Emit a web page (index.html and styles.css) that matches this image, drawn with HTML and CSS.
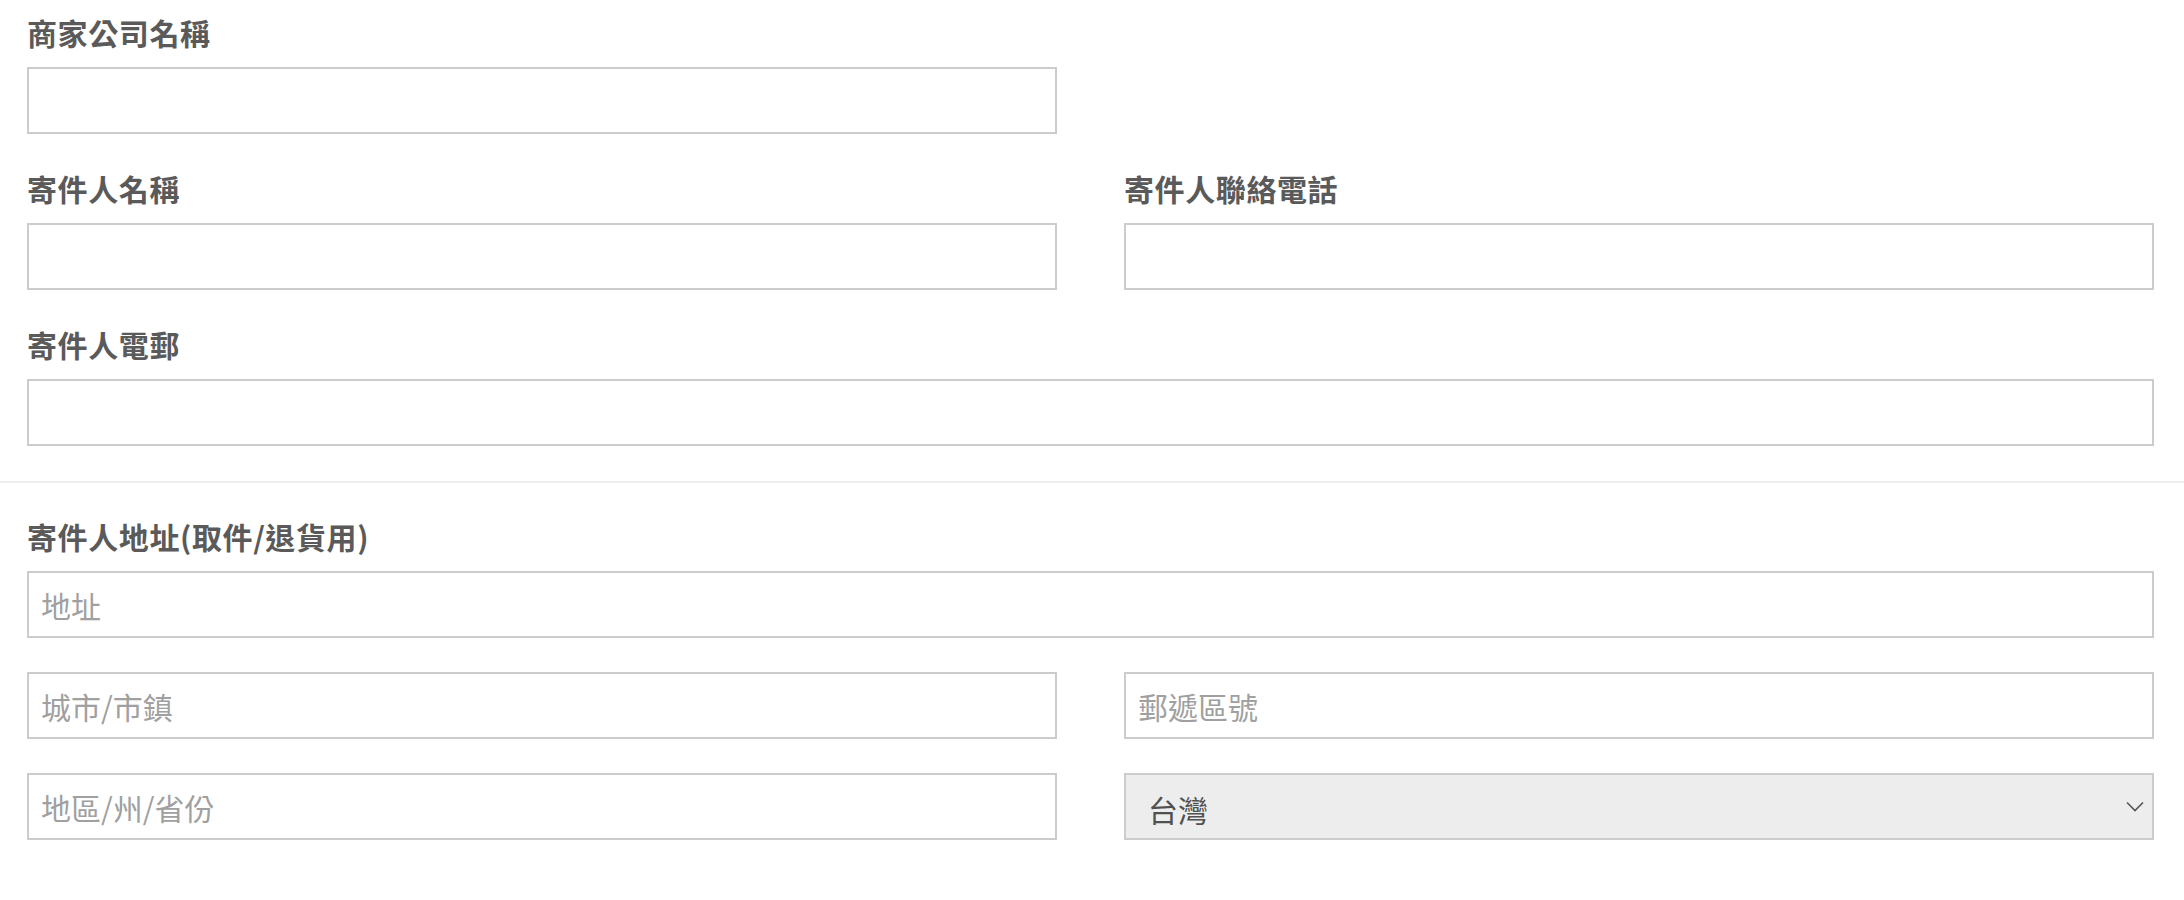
FILE: index.html
```html
<!DOCTYPE html>
<html lang="zh-Hant">
<head>
    <meta charset="UTF-8">
    <meta name="viewport" content="width=device-width, initial-scale=1.0">
    <title>寄件人資料</title>
    <link rel="stylesheet" href="styles.css">
</head>
<body>

    <!-- Merchant / sender info -->
    <div class="form-section">
        <div class="row">
            <div class="field">
                <label for="company">商家公司名稱</label>
                <input type="text" id="company">
            </div>
        </div>
        <div class="row">
            <div class="field">
                <label for="sender-name">寄件人名稱</label>
                <input type="text" id="sender-name">
            </div>
            <div class="field">
                <label for="sender-phone">寄件人聯絡電話</label>
                <input type="text" id="sender-phone">
            </div>
        </div>
        <div class="field">
            <label for="sender-email">寄件人電郵</label>
            <input type="email" id="sender-email">
        </div>
    </div>

    <!-- Sender address -->
    <div class="form-section address-section">
        <label for="address">寄件人地址(取件/退貨用)</label>
        <div class="address-fields">
            <input type="text" id="address" placeholder="地址">
            <div class="row">
                <input type="text" placeholder="城市/市鎮">
                <input type="text" placeholder="郵遞區號">
            </div>
            <div class="row">
                <input type="text" placeholder="地區/州/省份">
                <div class="select-wrap">
                    <select>
                        <option>台灣</option>
                        <option>香港</option>
                        <option>澳門</option>
                    </select>
                    <svg class="chevron" width="18" height="11" viewBox="0 0 18 11">
                        <path d="M1 1.5 L9 9.5 L17 1.5" fill="none" stroke="#555" stroke-width="1.6"/>
                    </svg>
                </div>
            </div>
        </div>
    </div>

</body>
</html>
```

FILE: styles.css
```css
/* Basic Styling */
body {
    font-family: "Noto Sans CJK TC", "Noto Sans", sans-serif;
    background-color: #fff;
    margin: 0;
    padding: 0;
}

.form-section {
    padding: 14px 30px 35px 27px;
}

.row {
    display: grid;
    grid-template-columns: 1fr 1fr;
    column-gap: 67px;
}

.field {
    margin-bottom: 36px;
}

.form-section > .field:last-child {
    margin-bottom: 0;
}

label {
    display: block;
    font-size: 30px;
    line-height: 36px;
    font-weight: bold;
    letter-spacing: 0.6px;
    color: #5a5a5a;
    margin-bottom: 17px;
}

input,
select {
    display: block;
    width: 100%;
    height: 67px;
    box-sizing: border-box;
    border: 2px solid #ccc;
    border-radius: 0;
    background-color: #fff;
    padding: 0 12px;
    margin: 0;
    font-family: inherit;
    font-size: 30px;
    color: #555;
    outline: none;
}

input::placeholder {
    color: #a0a0a0;
}

.address-section {
    border-top: 2px solid #eee;
    padding-top: 35px;
}

.address-fields {
    display: flex;
    flex-direction: column;
    gap: 34px;
}

.select-wrap {
    position: relative;
}

.select-wrap select {
    appearance: none;
    -webkit-appearance: none;
    background-color: #ededed;
    padding: 4px 60px 0 22px;
    color: #505050;
}

.chevron {
    position: absolute;
    right: 10px;
    top: 28px;
    pointer-events: none;
}
```
